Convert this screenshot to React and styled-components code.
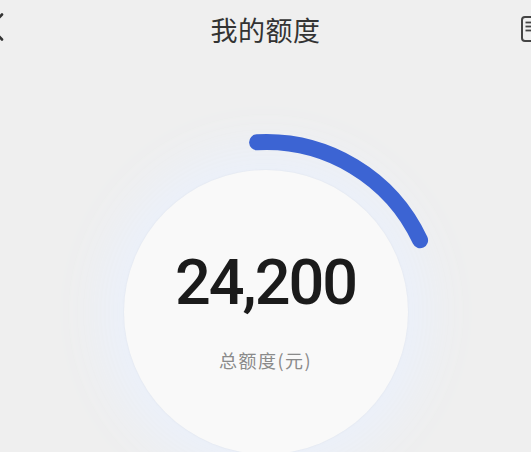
import React from "react";
import styled, { createGlobalStyle } from "styled-components";

const GlobalStyle = createGlobalStyle`
  html, body {
    margin: 0;
    padding: 0;
    height: 100%;
    overflow: hidden;
    background: #efefef;
  }
  body {
    font-family: "Noto Sans CJK SC", "Noto Sans", sans-serif;
  }
`;

const Page = styled.div`
  width: 531px;
  height: 452px;
  overflow: hidden;
  background: #efefef;
  display: flex;
  flex-direction: column;
`;

const Header = styled.header`
  height: 58px;
  flex-shrink: 0;
  display: grid;
  grid-template-columns: 1fr auto 1fr;
  align-items: center;
`;

const Title = styled.h1`
  margin: 0;
  font-family: "Noto Sans CJK SC", sans-serif;
  font-size: 27px;
  line-height: 1;
  font-weight: 400;
  color: #333;
  letter-spacing: 0.5px;
`;

const SideCell = styled.div`
  display: flex;
  justify-content: ${(p) => (p.$end ? "flex-end" : "flex-start")};
  align-items: center;
`;

const BackIcon = styled.svg`
  width: 16px;
  height: 28px;
  margin-left: -12px;
  margin-bottom: 4px;
`;

const DocIcon = styled.svg`
  width: 22px;
  height: 26px;
  margin-right: -12px;
`;

const Gauge = styled.div`
  position: relative;
  width: 356px;
  height: 356px;
  margin: 76px auto 0;
  display: flex;
  align-items: center;
  justify-content: center;
  flex-shrink: 0;
`;

const Dial = styled.div`
  width: 284px;
  height: 284px;
  border-radius: 50%;
  background: #f9f9f9;
  box-shadow: 0 0 3px rgba(0, 0, 0, 0.05), 0 0 50px 20px rgba(234, 240, 252, 0.95);
  display: flex;
  flex-direction: column;
  align-items: center;
  padding-top: 81px;
  box-sizing: border-box;
`;

const Amount = styled.div`
  font-family: Roboto, "Liberation Sans", sans-serif;
  font-weight: 500;
  font-size: 63px;
  line-height: 1;
  letter-spacing: -2px;
  color: #1b1b1b;
`;

const Label = styled.div`
  margin-top: 37px;
  font-family: "Noto Sans CJK SC", sans-serif;
  font-size: 18px;
  line-height: 1;
  letter-spacing: 1.5px;
  color: #8a8a8a;
`;

const Arc = styled.svg`
  position: absolute;
  inset: 0;
  width: 356px;
  height: 356px;
  overflow: visible;
  pointer-events: none;
`;

function polar(cx, cy, r, deg) {
  const a = (deg * Math.PI) / 180;
  return [cx + r * Math.sin(a), cy - r * Math.cos(a)];
}

export default function App() {
  const [sx, sy] = polar(178, 178, 170, -3);
  const [ex, ey] = polar(178, 178, 170, 65);
  return (
    <>
      <GlobalStyle />
      <Page>
        <Header>
          <SideCell>
            <BackIcon viewBox="0 0 16 28" fill="none">
              <polyline
                points="14,1.5 2,14 14,26.5"
                stroke="#333"
                strokeWidth="2.6"
                strokeLinecap="round"
                strokeLinejoin="round"
              />
            </BackIcon>
          </SideCell>
          <Title>我的额度</Title>
          <SideCell $end>
            <DocIcon viewBox="0 0 22 26" fill="none">
              <rect x="1" y="1" width="20" height="24" rx="3" stroke="#444" strokeWidth="2" />
              <line x1="4.5" y1="6.5" x2="16" y2="6.5" stroke="#444" strokeWidth="1.8" />
              <line x1="4.5" y1="10.5" x2="16" y2="10.5" stroke="#444" strokeWidth="1.8" />
              <line x1="4.5" y1="14.5" x2="16" y2="14.5" stroke="#444" strokeWidth="1.8" />
            </DocIcon>
          </SideCell>
        </Header>
        <Gauge>
          <Dial>
            <Amount>24,200</Amount>
            <Label>总额度(元)</Label>
          </Dial>
          <Arc viewBox="0 0 356 356" fill="none">
            <path
              d={`M ${sx} ${sy} A 170 170 0 0 1 ${ex} ${ey}`}
              stroke="#3c64d3"
              strokeWidth="16"
              strokeLinecap="round"
            />
          </Arc>
        </Gauge>
      </Page>
    </>
  );
}
